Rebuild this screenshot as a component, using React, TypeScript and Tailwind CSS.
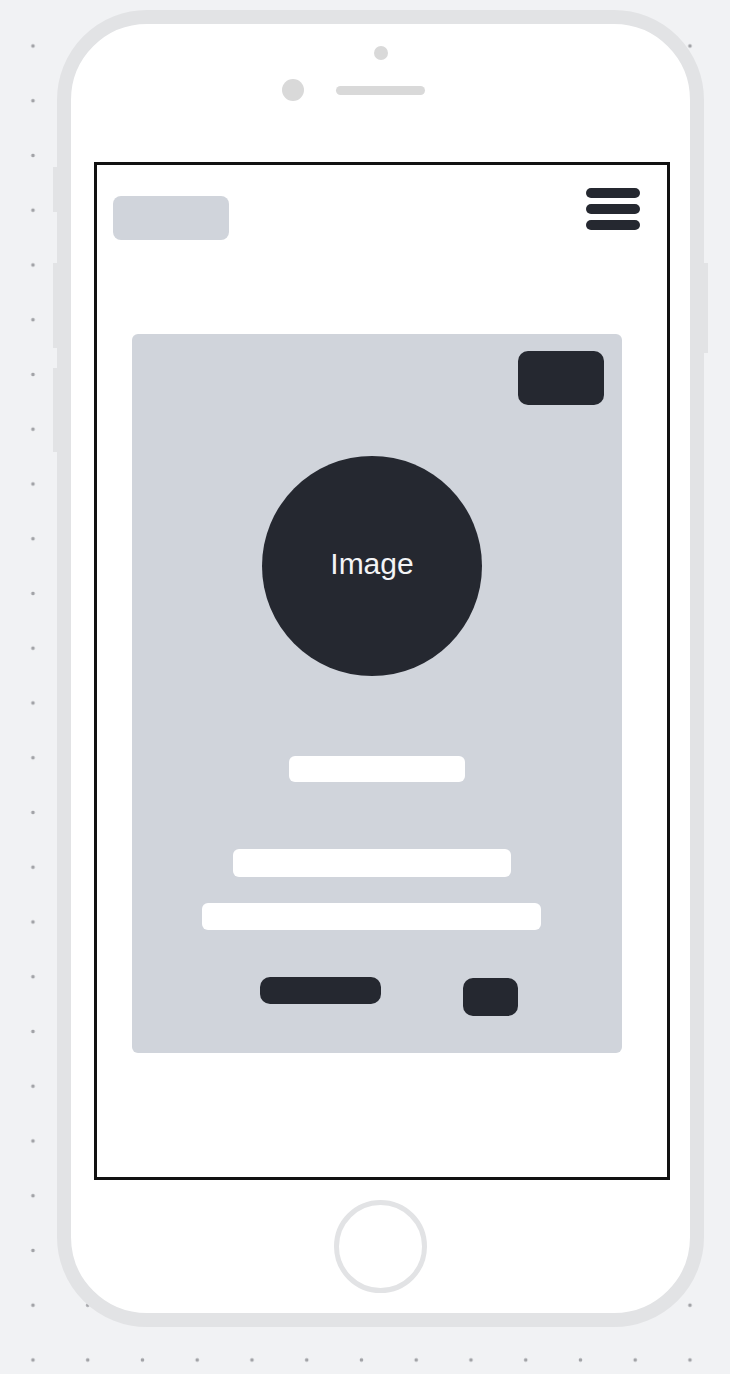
const dark = "bg-[#252830]";

const Hamburger = () => (
  <div className="mt-[23px] mr-[27px] flex flex-col gap-[6px]">
    <span className={`block h-[10px] w-[54px] rounded-full ${dark}`} />
    <span className={`block h-[10px] w-[54px] rounded-full ${dark}`} />
    <span className={`block h-[10px] w-[54px] rounded-full ${dark}`} />
  </div>
);

const ProfileCard = () => (
  <div className="ml-[35px] mt-[94px] flex h-[719px] w-[490px] flex-col items-start rounded-[6px] bg-[#d0d4db]">
    <div className={`mt-[17px] ml-[386px] h-[54px] w-[86px] rounded-[10px] ${dark}`} />
    <div className={`mt-[51px] ml-[130px] flex h-[220px] w-[220px] items-center justify-center rounded-full ${dark}`}>
      <span className="-mt-[6px] font-['Liberation_Sans',Arial,sans-serif] text-[30px] text-[#f3f4f6]">Image</span>
    </div>
    <div className="mt-[80px] ml-[157px] h-[26px] w-[176px] rounded-[6px] bg-white" />
    <div className="mt-[67px] ml-[101px] h-[28px] w-[278px] rounded-[6px] bg-white" />
    <div className="mt-[26px] ml-[70px] h-[27px] w-[339px] rounded-[6px] bg-white" />
    <div className="mt-[47px] ml-[128px] flex items-start gap-[82px]">
      <div className={`h-[27px] w-[121px] rounded-[10px] ${dark}`} />
      <div className={`mt-px h-[38px] w-[55px] rounded-[10px] ${dark}`} />
    </div>
  </div>
);

export default function App() {
  return (
    <div className="h-[1374px] w-[730px] overflow-hidden bg-[#f1f2f4] bg-[radial-gradient(circle,#a2a3a7_1.4px,transparent_2.2px)] bg-[length:54.75px_54.75px] bg-[position:5.6px_18.6px] pt-[10px] pl-[57px]">
      <div className="relative h-[1317px] w-[647px] rounded-[90px] border-[14px] border-[#e2e3e5] bg-white">
        {/* side buttons */}
        <span className="absolute -left-[18px] top-[143px] h-[45px] w-[4px] bg-[#e2e3e5]" />
        <span className="absolute -left-[18px] top-[239px] h-[85px] w-[4px] bg-[#e2e3e5]" />
        <span className="absolute -left-[18px] top-[344px] h-[84px] w-[4px] bg-[#e2e3e5]" />
        <span className="absolute -right-[18px] top-[239px] h-[90px] w-[4px] bg-[#e2e3e5]" />

        <div className="flex flex-col">
          <div className="mt-[22px] h-[14px] w-[14px] self-center rounded-full bg-[#d9d9d9]" />
          <div className="mt-[19px] flex items-center gap-[32px] self-center">
            <div className="h-[22px] w-[22px] rounded-full bg-[#d9d9d9]" />
            <div className="h-[9px] w-[89px] rounded-full bg-[#d9d9d9]" />
            <div className="w-[22px]" />
          </div>

          <div className="mt-[61px] ml-[23px] h-[1018px] w-[576px] border-[3px] border-[#111111] bg-white">
            <div className="flex items-start justify-between">
              <div className="mt-[31px] ml-[16px] h-[44px] w-[116px] rounded-[8px] bg-[#d0d4db]" />
              <Hamburger />
            </div>
            <ProfileCard />
          </div>

          <div className="mt-[20px] h-[93px] w-[93px] self-center rounded-full border-[5px] border-[#e2e3e5]" />
        </div>
      </div>
    </div>
  );
}
